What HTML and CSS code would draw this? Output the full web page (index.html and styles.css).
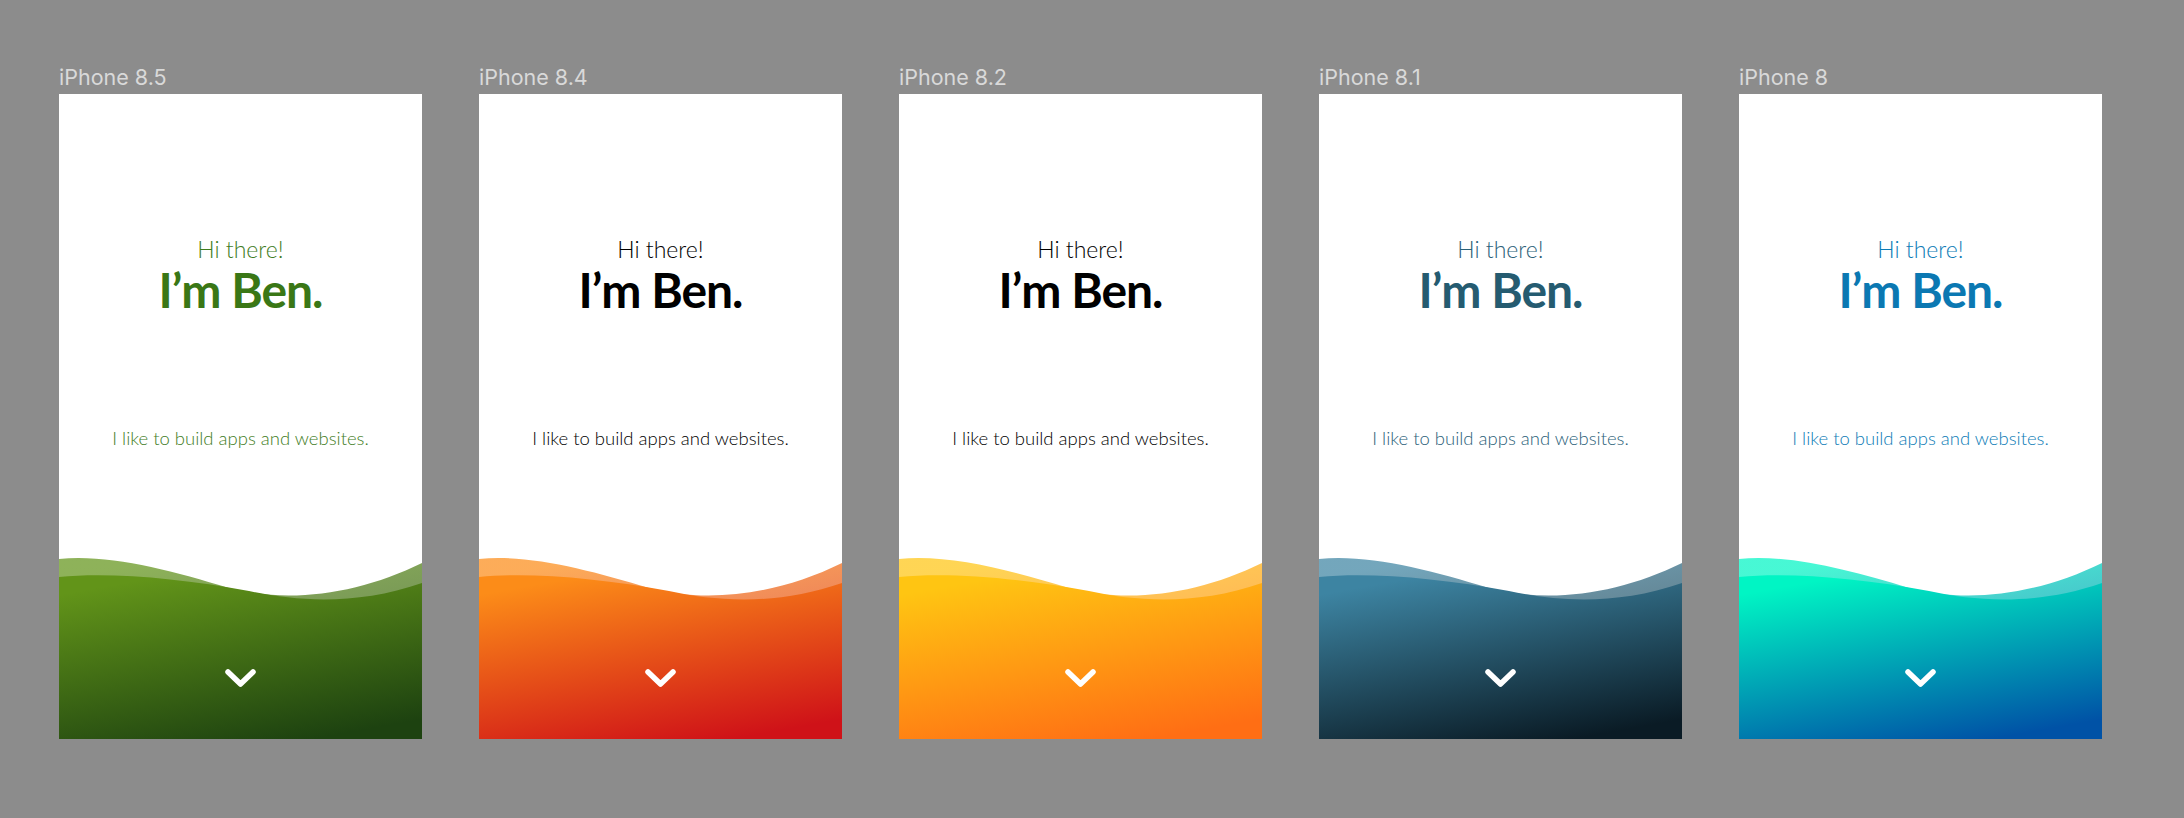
FILE: index.html
```html
<!DOCTYPE html>
<html lang="en">
<head>
<meta charset="utf-8">
<title>Artboards</title>
<link rel="stylesheet" href="styles.css">
</head>
<body>
<main class="canvas">

  <section class="artboard theme-green">
    <div class="artboard-label">iPhone 8.5</div>
    <div class="screen">
      <div class="intro">
        <p class="greeting">Hi there!</p>
        <h1 class="name">I’m Ben.</h1>
      </div>
      <p class="tagline">I like to build apps and websites.</p>
      <svg class="wave" viewBox="0 460 363 185" width="363" height="185" aria-hidden="true">
        <defs>
          <linearGradient id="grad-green" x1="0.3" y1="0" x2="0.7" y2="1">
            <stop offset="0" class="stop-a"/>
            <stop offset="1" class="stop-b"/>
          </linearGradient>
        </defs>
        <path class="wave-back" fill="url(#grad-green)" d="M0,465 C50,460 110,476 170,494 C230,510 300,500 363,469 L363,645 L0,645 Z"/>
        <path class="wave-front" fill="url(#grad-green)" d="M0,483 C50,478 120,484 190,497 C240,508 300,511 363,489 L363,645 L0,645 Z"/>
        <path class="chevron" d="M169,578 L181.5,590 L194,578"/>
      </svg>
    </div>
  </section>

  <section class="artboard theme-red">
    <div class="artboard-label">iPhone 8.4</div>
    <div class="screen">
      <div class="intro">
        <p class="greeting">Hi there!</p>
        <h1 class="name">I’m Ben.</h1>
      </div>
      <p class="tagline">I like to build apps and websites.</p>
      <svg class="wave" viewBox="0 460 363 185" width="363" height="185" aria-hidden="true">
        <defs>
          <linearGradient id="grad-red" x1="0.3" y1="0" x2="0.7" y2="1">
            <stop offset="0" class="stop-a"/>
            <stop offset="1" class="stop-b"/>
          </linearGradient>
        </defs>
        <path class="wave-back" fill="url(#grad-red)" d="M0,465 C50,460 110,476 170,494 C230,510 300,500 363,469 L363,645 L0,645 Z"/>
        <path class="wave-front" fill="url(#grad-red)" d="M0,483 C50,478 120,484 190,497 C240,508 300,511 363,489 L363,645 L0,645 Z"/>
        <path class="chevron" d="M169,578 L181.5,590 L194,578"/>
      </svg>
    </div>
  </section>

  <section class="artboard theme-amber">
    <div class="artboard-label">iPhone 8.2</div>
    <div class="screen">
      <div class="intro">
        <p class="greeting">Hi there!</p>
        <h1 class="name">I’m Ben.</h1>
      </div>
      <p class="tagline">I like to build apps and websites.</p>
      <svg class="wave" viewBox="0 460 363 185" width="363" height="185" aria-hidden="true">
        <defs>
          <linearGradient id="grad-amber" x1="0.3" y1="0" x2="0.7" y2="1">
            <stop offset="0" class="stop-a"/>
            <stop offset="1" class="stop-b"/>
          </linearGradient>
        </defs>
        <path class="wave-back" fill="url(#grad-amber)" d="M0,465 C50,460 110,476 170,494 C230,510 300,500 363,469 L363,645 L0,645 Z"/>
        <path class="wave-front" fill="url(#grad-amber)" d="M0,483 C50,478 120,484 190,497 C240,508 300,511 363,489 L363,645 L0,645 Z"/>
        <path class="chevron" d="M169,578 L181.5,590 L194,578"/>
      </svg>
    </div>
  </section>

  <section class="artboard theme-navy">
    <div class="artboard-label">iPhone 8.1</div>
    <div class="screen">
      <div class="intro">
        <p class="greeting">Hi there!</p>
        <h1 class="name">I’m Ben.</h1>
      </div>
      <p class="tagline">I like to build apps and websites.</p>
      <svg class="wave" viewBox="0 460 363 185" width="363" height="185" aria-hidden="true">
        <defs>
          <linearGradient id="grad-navy" x1="0.3" y1="0" x2="0.7" y2="1">
            <stop offset="0" class="stop-a"/>
            <stop offset="1" class="stop-b"/>
          </linearGradient>
        </defs>
        <path class="wave-back" fill="url(#grad-navy)" d="M0,465 C50,460 110,476 170,494 C230,510 300,500 363,469 L363,645 L0,645 Z"/>
        <path class="wave-front" fill="url(#grad-navy)" d="M0,483 C50,478 120,484 190,497 C240,508 300,511 363,489 L363,645 L0,645 Z"/>
        <path class="chevron" d="M169,578 L181.5,590 L194,578"/>
      </svg>
    </div>
  </section>

  <section class="artboard theme-teal">
    <div class="artboard-label">iPhone 8</div>
    <div class="screen">
      <div class="intro">
        <p class="greeting">Hi there!</p>
        <h1 class="name">I’m Ben.</h1>
      </div>
      <p class="tagline">I like to build apps and websites.</p>
      <svg class="wave" viewBox="0 460 363 185" width="363" height="185" aria-hidden="true">
        <defs>
          <linearGradient id="grad-teal" x1="0.3" y1="0" x2="0.7" y2="1">
            <stop offset="0" class="stop-a"/>
            <stop offset="1" class="stop-b"/>
          </linearGradient>
        </defs>
        <path class="wave-back" fill="url(#grad-teal)" d="M0,465 C50,460 110,476 170,494 C230,510 300,500 363,469 L363,645 L0,645 Z"/>
        <path class="wave-front" fill="url(#grad-teal)" d="M0,483 C50,478 120,484 190,497 C240,508 300,511 363,489 L363,645 L0,645 Z"/>
        <path class="chevron" d="M169,578 L181.5,590 L194,578"/>
      </svg>
    </div>
  </section>

</main>
</body>
</html>
```

FILE: styles.css
```css
* {
  box-sizing: border-box;
}

html, body {
  margin: 0;
  padding: 0;
  background: #8c8c8c;
}

body {
  width: 2184px;
  height: 818px;
  overflow: hidden;
  font-family: "Lato", "Liberation Sans", sans-serif;
}

.canvas {
  display: flex;
  align-items: flex-start;
  gap: 57px;
  padding: 66px 0 0 59px;
}

.artboard {
  display: flex;
  flex-direction: column;
  width: 363px;
}

.artboard-label {
  font-family: "Inter", "Liberation Sans", sans-serif;
  font-size: 21.5px;
  line-height: 22px;
  height: 22px;
  margin-bottom: 6px;
  color: #d9d9d9;
  white-space: nowrap;
}

.screen {
  width: 363px;
  height: 645px;
  background: #ffffff;
  display: flex;
  flex-direction: column;
  align-items: center;
  overflow: hidden;
}

.intro {
  display: flex;
  flex-direction: column;
  align-items: center;
  padding-top: 144px;
}

.greeting {
  margin: 0;
  font-size: 23px;
  line-height: 23px;
  font-weight: 300;
  color: var(--text-soft);
}

.name {
  margin: 5px 0 0;
  font-size: 48px;
  line-height: 48px;
  font-weight: 700;
  letter-spacing: -1px;
  color: var(--text-strong);
}

.tagline {
  margin: 114px 0 0;
  font-size: 18.5px;
  line-height: 20px;
  font-weight: 300;
  color: var(--text-soft);
  white-space: nowrap;
}

.wave {
  display: block;
  margin-top: auto;
  flex: none;
}

.wave-back {
  opacity: 0.72;
}

.chevron {
  fill: none;
  stroke: #ffffff;
  stroke-width: 5.5;
  stroke-linecap: round;
  stroke-linejoin: round;
}

.stop-a { stop-color: var(--grad-a); }
.stop-b { stop-color: var(--grad-b); }

.theme-green {
  --text-strong: #3a7716;
  --text-soft: #3f7d1e;
  --grad-a: #629419;
  --grad-b: #1d4210;
}

.theme-red {
  --text-strong: #000000;
  --text-soft: #000000;
  --grad-a: #fc8c18;
  --grad-b: #cf1218;
}

.theme-amber {
  --text-strong: #000000;
  --text-soft: #000000;
  --grad-a: #ffc512;
  --grad-b: #ff6e14;
}

.theme-navy {
  --text-strong: #255b70;
  --text-soft: #2b6179;
  --grad-a: #3d84a2;
  --grad-b: #0a1b25;
}

.theme-teal {
  --text-strong: #0b78b2;
  --text-soft: #0d7cb6;
  --grad-a: #00f5c4;
  --grad-b: #0052a6;
}
```
